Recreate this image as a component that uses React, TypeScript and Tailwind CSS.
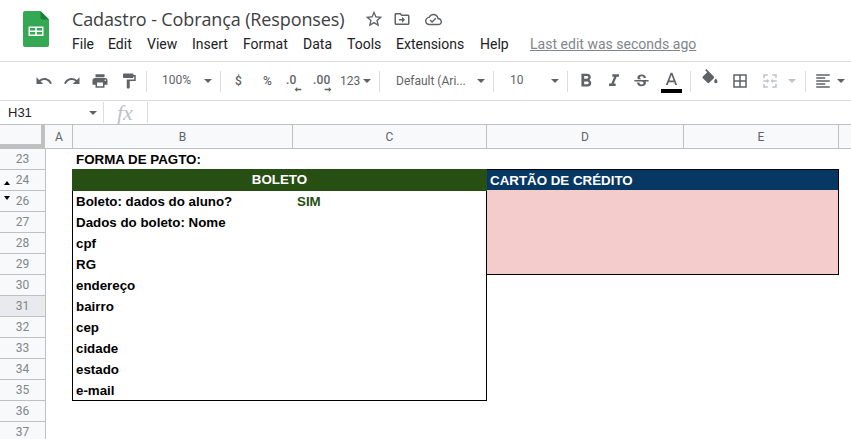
import React from "react";

const ICON = "#5f6368";
const P = {
  undo: "M12.5 8c-2.65 0-5.05.99-6.9 2.6L2 7v9h9l-3.62-3.62c1.39-1.16 3.16-1.88 5.12-1.88 3.54 0 6.55 2.31 7.6 5.5l2.37-.78C21.08 11.03 17.15 8 12.5 8z",
  redo: "M18.4 10.6C16.55 8.99 14.15 8 11.5 8c-4.65 0-8.58 3.03-9.96 7.22L3.9 16c1.05-3.19 4.05-5.5 7.6-5.5 1.95 0 3.73.72 5.12 1.88L13 16h9V7l-3.6 3.6z",
  print: "M19 8H5c-1.66 0-3 1.34-3 3v6h4v4h12v-4h4v-6c0-1.66-1.34-3-3-3zm-3 11H8v-5h8v5zm3-7c-.55 0-1-.45-1-1s.45-1 1-1 1 .45 1 1-.45 1-1 1zm-1-9H6v4h12V3z",
  paint: "M18 4V3c0-.55-.45-1-1-1H5c-.55 0-1 .45-1 1v4c0 .55.45 1 1 1h12c.55 0 1-.45 1-1V6h1v4H9v11c0 .55.45 1 1 1h2c.55 0 1-.45 1-1v-9h8V4h-3z",
  bold: "M15.6 10.79c.97-.67 1.65-1.77 1.65-2.79 0-2.26-1.75-4-4-4H7v14h7.04c2.09 0 3.71-1.7 3.71-3.79 0-1.52-.86-2.82-2.15-3.42zM10 6.5h3c.83 0 1.5.67 1.5 1.5s-.67 1.5-1.5 1.5h-3v-3zm3.5 9H10v-3h3.5c.83 0 1.5.67 1.5 1.5s-.67 1.5-1.5 1.5z",
  italic: "M10 4v3h2.21l-3.42 8H6v3h8v-3h-2.21l3.42-8H18V4z",
  strike: "M6.85 7.08C6.85 4.37 9.45 3 12.24 3c1.64 0 3 .49 3.9 1.28.77.65 1.46 1.73 1.46 3.24h-3.01c0-.31-.05-.59-.15-.85-.29-.86-1.2-1.28-2.25-1.28-1.86 0-2.34 1.02-2.34 1.7 0 .48.25.88.74 1.21.38.25.77.48 1.41.7H7.39c-.21-.34-.54-.89-.54-1.92zM21 12v-2H3v2h9.62c1.15.45 1.96.75 1.96 1.97 0 1-.81 1.67-2.28 1.67-1.54 0-2.93-.54-2.93-2.51H6.4c0 .55.08 1.13.24 1.58.81 2.29 3.32 3.3 5.67 3.3 2.25 0 5.27-.98 5.27-4.3 0-.7-.13-1.34-.35-1.71H21z",
  letterA: "M11 3L5.5 17h2.25l1.12-3h6.25l1.12 3h2.25L13 3h-2zm-1.38 9L12 5.67 14.38 12H9.62z",
  fill: "M16.56 8.94L7.62 0 6.21 1.41l2.38 2.38-5.15 5.15c-.59.59-.59 1.54 0 2.12l5.5 5.5c.29.29.68.44 1.06.44s.77-.15 1.06-.44l5.5-5.5c.59-.58.59-1.53 0-2.12zM19 11.5s-2 2.17-2 3.5c0 1.1.9 2 2 2s2-.9 2-2c0-1.33-2-3.5-2-3.5z",
  borders: "M3 3v18h18V3H3zm8 16H5v-6h6v6zm0-8H5V5h6v6zm8 8h-6v-6h6v6zm0-8h-6V5h6v6z",
  merge: "M3 3h6v2H5v3H3V3zm12 0h6v5h-2V5h-4V3zM3 16h2v3h4v2H3v-5zm16 0h2v5h-6v-2h4v-3zM3 11h5V9l3 3-3 3v-2H3v-2zm18 0h-5V9l-3 3 3 3v-2h5v-2z",
  align: "M15 15H3v2h12v-2zm0-8H3v2h12V7zM3 13h18v-2H3v2zm0 8h18v-2H3v2zM3 3v2h18V3H3z",
  star: "M22 9.24l-7.19-.62L12 2 9.19 8.63 2 9.24l5.46 4.73L5.82 21 12 17.27 18.18 21l-1.63-7.03L22 9.24zM12 15.4l-3.76 2.27 1-4.28-3.32-2.88 4.38-.38L12 6.1l1.71 4.04 4.38.38-3.32 2.88 1 4.28L12 15.4z",
  move: "M20 6h-8l-2-2H4c-1.1 0-2 .9-2 2v12c0 1.1.9 2 2 2h16c1.1 0 2-.9 2-2V8c0-1.1-.9-2-2-2zm0 12H4V6h5.17l2 2H20v10zm-8-1l4-4-4-4v3H8v2h4v3z",
  cloud: "M19.35 10.04C18.67 6.59 15.64 4 12 4 9.11 4 6.6 5.64 5.35 8.04 2.34 8.36 0 10.91 0 14c0 3.31 2.69 6 6 6h13c2.76 0 5-2.24 5-5 0-2.64-2.05-4.78-4.65-4.96zM19 18H6c-2.21 0-4-1.79-4-4 0-2.05 1.53-3.76 3.56-3.97l1.07-.11.5-.95C8.08 7.14 9.94 6 12 6c2.62 0 4.88 1.86 5.39 4.43l.3 1.5 1.53.11c1.56.1 2.78 1.41 2.78 2.96 0 1.65-1.35 3-3 3zm-9-3.82l-2.09-2.09L6.5 13.5 10 17l6.01-6.01-1.41-1.41z",
};

function Icon({ d, size = 18, color = ICON, className = "" }: { d: string; size?: number; color?: string; className?: string }) {
  return (
    <svg width={size} height={size} viewBox="0 0 24 24" fill={color} className={"shrink-0 " + className}>
      <path d={d} />
    </svg>
  );
}

function Caret({ className = "", color = ICON }: { className?: string; color?: string }) {
  return (
    <svg width="8" height="4" viewBox="0 0 8 4" fill={color} className={"shrink-0 " + className}>
      <path d="M0 0h8L4 4z" />
    </svg>
  );
}

const Sep = ({ className = "" }: { className?: string }) => <div className={"w-px h-[21px] shrink-0 bg-[#dadce0] " + className} />;

const rows = ["23", "24", "26", "27", "28", "29", "30", "31", "32", "33", "34", "35", "36", "37"];
const labels = ["Dados do boleto: Nome", "cpf", "RG", "endereço", "bairro", "cep", "cidade", "estado", "e-mail"];
const menu: [string, string][] = [
  ["File", "w-[36px]"],
  ["Edit", "w-[39px]"],
  ["View", "w-[45px]"],
  ["Insert", "w-[51px]"],
  ["Format", "w-[60px]"],
  ["Data", "w-[44px]"],
  ["Tools", "w-[49px]"],
  ["Extensions", "w-[84px]"],
  ["Help", "w-[50px]"],
];

export default function App() {
  return (
    <div className="w-[851px] h-[439px] overflow-hidden bg-white flex flex-col font-['Roboto',sans-serif] text-[#3c4043]">
      {/* title block */}
      <div className="h-[61px] shrink-0 flex border-b border-[#dadce0] box-content">
        <div className="w-[72px] shrink-0 pl-[23px] pt-[11px]">
          <svg width="26" height="36" viewBox="0 0 26 36">
            <path d="M2 0h15.5L26 8.5V34a2 2 0 0 1-2 2H2a2 2 0 0 1-2-2V2a2 2 0 0 1 2-2z" fill="#34a853" />
            <path d="M17.5 0L26 8.5h-6.5a2 2 0 0 1-2-2z" fill="#188038" />
            <path d="M5.5 15.5h15v9.5h-15z" fill="#fff" />
            <path d="M7 17h5.2v2.4H7zM13.8 17H19v2.4h-5.2zM7 21h5.2v2.4H7zM13.8 21H19v2.4h-5.2z" fill="#34a853" />
          </svg>
        </div>
        <div className="flex flex-col">
          <div className="h-[26px] mt-[6px] flex items-center">
            <span className="text-[18px] text-[#3c4043] font-['Open_Sans',sans-serif] tracking-[-0.12px] whitespace-nowrap w-[292px]">Cadastro - Cobrança (Responses)</span>
            <Icon d={P.star} size={20} />
            <Icon d={P.move} size={18} className="ml-[9px]" />
            <Icon d={P.cloud} size={17} className="ml-[14px]" />
          </div>
          <div className="h-[20px] mt-[2px] flex items-center text-[14px]">
            {menu.map(([m, w]) => (
              <span key={m} className={"shrink-0 text-[#202124] " + w}>{m}</span>
            ))}
            <span className="text-[#80868b] underline text-[14px] tracking-[0.02px] whitespace-nowrap">Last edit was seconds ago</span>
          </div>
        </div>
      </div>

      {/* toolbar */}
      <div className="h-[38px] shrink-0 flex items-center border-b border-[#dadce0] box-content pl-[35px] text-[12px] text-[#5f6368]">
        <Icon d={P.undo} />
        <Icon d={P.redo} className="ml-[10px]" />
        <Icon d={P.print} className="ml-[10px]" />
        <Icon d={P.paint} className="ml-[11px]" />
        <Sep className="ml-[8px]" />
        <span className="ml-[15px] w-[30px] -mt-[2px]">100%</span>
        <Caret className="ml-[12px]" />
        <Sep className="ml-[8px]" />
        <span className="ml-[14px] w-[8px] font-medium">$</span>
        <span className="ml-[20px] w-[10px] font-medium">%</span>
        <div className="ml-[13px] w-[11px] relative font-medium text-[12px] tracking-[0.2px] leading-[14px] -mt-[2px]">
          <span>.0</span>
          <svg width="8" height="5" viewBox="0 0 8 6" fill={ICON} className="absolute left-[8px] top-[14px]"><path d="M3 0L0 3l3 3V4h5V2H3z" /></svg>
        </div>
        <div className="ml-[16px] w-[18px] relative font-medium text-[12px] tracking-[0.2px] leading-[14px] -mt-[2px]">
          <span>.00</span>
          <svg width="8" height="5" viewBox="0 0 8 6" fill={ICON} className="absolute left-[11px] top-[14px]"><path d="M5 0l3 3-3 3V4H0V2h5z" /></svg>
        </div>
        <span className="ml-[9px] w-[23px]">123</span>
        <Caret />
        <Sep className="ml-[8px]" />
        <span className="ml-[16px] w-[74px] whitespace-nowrap">Default (Ari...</span>
        <Caret className="ml-[7px]" />
        <Sep className="ml-[8px]" />
        <span className="ml-[16px] w-[14px] -mt-[2px]">10</span>
        <Caret className="ml-[27px]" />
        <Sep className="ml-[8px]" />
        <Icon d={P.bold} size={22} className="ml-[7px]" />
        <Icon d={P.italic} size={20} className="ml-[7px]" />
        <Icon d={P.strike} size={19} className="ml-[8px]" />
        <div className="ml-[10px] w-[21px] h-[25px] relative flex justify-center pt-px">
          <Icon d={P.letterA} size={21} />
          <div className="absolute left-0 right-0 bottom-px h-[4px] bg-black" />
        </div>
        <Sep className="ml-[8px]" />
        <Icon d={P.fill} size={20} className="ml-[9px] -mt-[5px]" />
        <Icon d={P.borders} className="ml-[11px]" />
        <Icon d={P.merge} color="#bdc1c6" className="ml-[12px]" />
        <Caret color="#bdc1c6" className="ml-[9px]" />
        <Sep className="ml-[9px]" />
        <Icon d={P.align} className="ml-[8px]" />
        <Caret className="ml-[5px]" />
      </div>

      {/* formula bar */}
      <div className="h-[23px] shrink-0 flex items-center border-b border-[#c0c0c0] box-content">
        <span className="ml-[8px] w-[81px] text-[13px] text-[#202124] font-['Liberation_Sans',sans-serif]">H31</span>
        <Caret />
        <Sep className="ml-[6px]" />
        <span className="ml-[13px] w-[30px] text-[22px] leading-none italic text-[#bdc1c6] font-['Liberation_Serif',serif]">fx</span>
        <Sep />
      </div>

      {/* column headers */}
      <div className="h-[23px] shrink-0 grid grid-cols-[46px_27px_220px_194px_197px_155px_1fr] border-b border-[#c0c0c0] box-content bg-[#f8f9fa] text-[12px] text-[#5f6368] font-['Roboto',sans-serif]">
        <div className="border-r-[4px] border-b-[4px] border-[#c0c0c0] mr-px bg-[#f8f9fa] box-border" />
        {["A", "B", "C", "D", "E", ""].map((c, i) => (
          <div key={i} className={"flex items-center justify-center " + (i < 5 ? "border-r border-[#c0c0c0]" : "")}>{c}</div>
        ))}
      </div>

      {/* sheet */}
      <div className="grid grid-cols-[46px_27px_220px_194px_197px_155px_1fr] auto-rows-[21px] text-[13.33px] font-bold text-black font-['Liberation_Sans',sans-serif]">
        {rows.map((r, i) => (
          <div
            key={r}
            style={{ gridRow: i + 1 }}
            className={"col-start-1 relative flex items-center justify-center border-r border-b border-[#c0c0c0] text-[12px] font-normal text-[#80868b] font-['Roboto',sans-serif] " + (r === "31" ? "bg-[#e8eaed]" : "bg-[#f8f9fa]")}
          >
            {r}
            {r === "24" && <div className="absolute left-[4px] top-[11px] w-0 h-0 border-l-[3.5px] border-r-[3.5px] border-b-[4px] border-l-transparent border-r-transparent border-b-black" />}
            {r === "26" && <div className="absolute left-[4px] top-[5px] w-0 h-0 border-l-[3.5px] border-r-[3.5px] border-t-[4px] border-l-transparent border-r-transparent border-t-black" />}
          </div>
        ))}

        <div className="col-start-3 col-span-2 row-start-1 pl-[3px] flex items-center">FORMA DE PAGTO:</div>

        <div className="col-start-3 col-span-2 row-start-2 row-span-11 -ml-px -mt-px border-l border-r border-b border-black flex flex-col">
          <div className="h-[22px] shrink-0 -ml-px -mr-px bg-[#274e13] text-white flex items-center justify-center">BOLETO</div>
          <div className="h-[21px] shrink-0 flex items-center pl-[3px]">
            <span className="w-[221px] shrink-0">Boleto: dados do aluno?</span>
            <span className="text-[#274e13]">SIM</span>
          </div>
          {labels.map((l) => (
            <div key={l} className="h-[21px] shrink-0 flex items-center pl-[3px]">{l}</div>
          ))}
        </div>

        <div className="col-start-5 col-span-2 row-start-2 row-span-5 -mt-px border-t border-r border-b border-black flex flex-col bg-[#f4cccc]">
          <div className="h-[20px] shrink-0 bg-[#073763] text-white flex items-center pl-[3px] pt-px">CARTÃO DE CRÉDITO</div>
        </div>
      </div>
    </div>
  );
}
